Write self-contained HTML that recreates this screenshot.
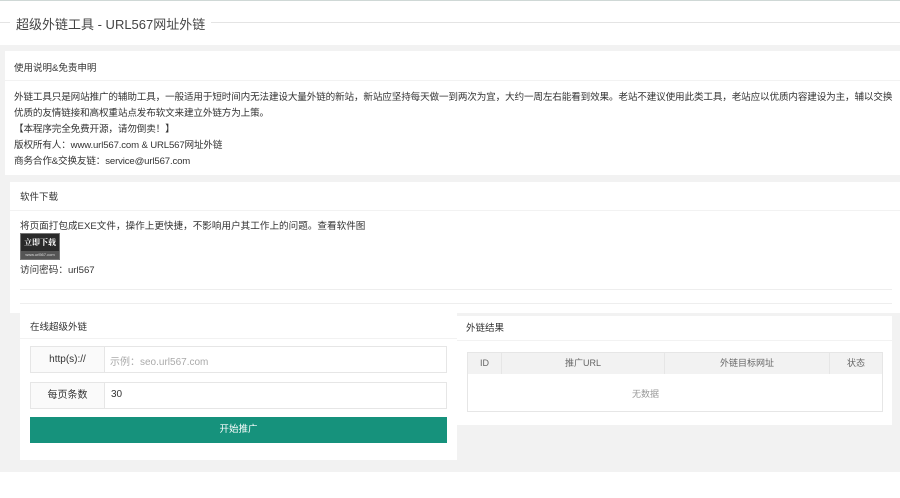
<!DOCTYPE html><html><head><meta charset="utf-8"><style>
body{margin:0;width:900px;height:498px;background:#fff;font-family:"Liberation Sans","Noto Sans CJK SC",sans-serif;color:#333;position:relative;overflow:hidden}
.a{position:absolute}
.t{font-size:10px;white-space:nowrap}
.th{position:absolute;top:0;height:21px;line-height:21px;text-align:center;font-size:9px;color:#666;border-right:1px solid #e6e6e6;box-sizing:border-box}
</style></head><body>
<div class="a" style="left:0;top:0;width:900px;height:1px;background:#cfd8d6"></div>
<div class="a" style="left:0;top:22px;width:900px;height:1px;background:#e4e4e4"></div>
<div class="a t" style="left:10px;top:14px;font-size:13px;background:#fff;padding:0 6px;color:#444">超级外链工具 - URL567网址外链</div>
<div class="a" style="left:0;top:45px;width:900px;height:427px;background:#f2f2f2"></div>
<div class="a" style="left:5px;top:51px;width:895px;height:124px;background:#fff"></div>
<div class="a" style="left:5px;top:80px;width:895px;height:1px;background:#f2f2f2"></div>
<div class="a t" style="left:14px;top:60px;font-size:9.5px">使用说明&amp;免责申明</div>
<div class="a t" style="left:14px;top:90px;line-height:16px;width:886px;white-space:normal;font-size:9.6px;letter-spacing:-0.15px">外链工具只是网站推广的辅助工具，一般适用于短时间内无法建设大量外链的新站，新站应坚持每天做一到两次为宜，大约一周左右能看到效果。老站不建议使用此类工具，老站应以优质内容建设为主，辅以交换优质的友情链接和高权重站点发布软文来建立外链方为上策。<br>【本程序完全免费开源，请勿倒卖！】<br>版权所有人：www.url567.com &amp; URL567网址外链<br>商务合作&amp;交换友链：service@url567.com</div>
<div class="a" style="left:10px;top:182px;width:890px;height:131px;background:#fff"></div>
<div class="a" style="left:10px;top:210px;width:890px;height:1px;background:#f2f2f2"></div>
<div class="a t" style="left:20px;top:189px;font-size:9.5px">软件下载</div>
<div class="a t" style="left:20px;top:218px;font-size:9.6px">将页面打包成EXE文件，操作上更快捷，不影响用户其工作上的问题。查看软件图</div>
<div class="a" style="left:20px;top:233px;width:38px;height:25px;background:#2a2a2a;border:1px solid #777;overflow:hidden">
<div style="color:#fff;font-size:8px;font-weight:bold;text-align:center;line-height:17px;white-space:nowrap;font-family:'Noto Serif CJK SC',serif">立即下载</div>
<div style="font-size:4px;line-height:8px;height:8px;background:#555;color:#ddd;text-align:center;white-space:nowrap;overflow:hidden">www.url567.com</div></div>
<div class="a t" style="left:20px;top:262px;font-size:9.6px">访问密码：url567</div>
<div class="a" style="left:20px;top:289px;width:872px;height:1px;background:#eee"></div>
<div class="a" style="left:20px;top:303px;width:872px;height:1px;background:#eee"></div>
<div class="a" style="left:20px;top:313px;width:437px;height:147px;background:#fff"></div>
<div class="a" style="left:20px;top:338px;width:437px;height:1px;background:#f2f2f2"></div>
<div class="a t" style="left:30px;top:319px;font-size:9.5px">在线超级外链</div>
<div class="a" style="left:30px;top:346px;width:415px;height:25px;border:1px solid #e6e6e6;background:#fff"></div>
<div class="a t" style="left:30px;top:346px;width:73px;height:25px;line-height:25px;text-align:center;background:#fafafa;border:1px solid #e6e6e6">http(s)://</div>
<div class="a t" style="left:110px;top:353px;color:#aaa">示例：seo.url567.com</div>
<div class="a" style="left:30px;top:382px;width:415px;height:25px;border:1px solid #e6e6e6;background:#fff"></div>
<div class="a t" style="left:30px;top:382px;width:73px;height:25px;line-height:25px;text-align:center;background:#fafafa;border:1px solid #e6e6e6">每页条数</div>
<div class="a t" style="left:111px;top:389px">30</div>
<div class="a t" style="left:30px;top:417px;width:417px;height:26px;line-height:26px;text-align:center;background:#16927c;color:#fff;font-size:9.5px">开始推广</div>
<div class="a" style="left:457px;top:316px;width:435px;height:109px;background:#fff"></div>
<div class="a" style="left:457px;top:340px;width:435px;height:1px;background:#f2f2f2"></div>
<div class="a t" style="left:466px;top:320px;font-size:9.5px">外链结果</div>
<div class="a" style="left:467px;top:352px;width:414px;height:58px;border:1px solid #e6e6e6"></div>
<div class="a" style="left:468px;top:353px;width:414px;height:21px;background:#f2f2f2">
<div class="th" style="left:0;width:34px">ID</div>
<div class="th" style="left:34px;width:163px">推广URL</div>
<div class="th" style="left:197px;width:165px">外链目标网址</div>
<div class="th" style="left:362px;width:52px;border:0">状态</div></div>
<div class="a" style="left:632px;top:387px;font-size:9px;color:#999">无数据</div>
</body></html>
